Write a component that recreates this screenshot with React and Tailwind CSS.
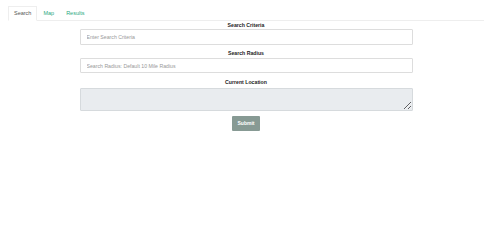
import React, { useState } from "react";

const App = () => {
  const [tab, setTab] = useState("search");

  const tabs = [
    { id: "search", label: "Search" },
    { id: "map", label: "Map" },
    { id: "results", label: "Results" },
  ];

  return (
    <div className="w-[492px] h-[243px] bg-white font-['Liberation_Sans',Arial,sans-serif] text-[#333]">
      <div className="px-2 pt-[6px]">
        <ul className="flex h-[15px] border-b border-[#eeeeee]">
          {tabs.map((t) => (
            <li key={t.id} className="flex -mb-px leading-none">
              <button
                onClick={() => setTab(t.id)}
                className={
                  t.id === tab
                    ? "block h-[15px] px-[5px] pt-[1px] text-[5.5px] leading-none border border-[#eeeeee] border-b-white bg-white text-[#555]"
                    : "block h-[15px] px-[5px] pt-[1px] text-[5.5px] leading-none border border-transparent text-[#2aa97e]"
                }
              >
                {t.label}
              </button>
            </li>
          ))}
        </ul>
      </div>

      <form
        onSubmit={(e) => e.preventDefault()}
        className="w-[333px] mx-auto flex flex-col items-center"
      >
        <label className="mt-[1px] h-[6px] text-[5.2px] font-bold leading-[6px] text-[#222]">
          Search Criteria
        </label>
        <input
          type="text"
          placeholder="Enter Search Criteria"
          className="mt-[1px] w-full h-[16px] px-[6px] text-[5.2px] border border-[#dddddd] rounded-[1px] placeholder:text-[#999] focus:outline-none"
        />

        <label className="mt-[5px] h-[6px] text-[5.2px] font-bold leading-[6px] text-[#222]">
          Search Radius
        </label>
        <input
          type="text"
          placeholder="Search Radius: Default 10 Mile Radius"
          className="mt-[2px] w-full h-[15px] px-[6px] text-[5.2px] border border-[#dddddd] rounded-[1px] placeholder:text-[#999] focus:outline-none"
        />

        <label className="mt-[6px] h-[6px] text-[5.2px] font-bold leading-[6px] text-[#222]">
          Current Location
        </label>
        <textarea
          disabled
          className="mt-[3px] w-full h-[23px] border border-[#d6dadd] rounded-[1px] bg-[#e9ecef] resize-y text-[5px]"
        />

        <button
          type="submit"
          className="mt-[5px] w-[28px] h-[15px] bg-[#879a94] text-white text-[5px] font-bold rounded-[1px] leading-none"
        >
          Submit
        </button>
      </form>
    </div>
  );
};

export default App;
